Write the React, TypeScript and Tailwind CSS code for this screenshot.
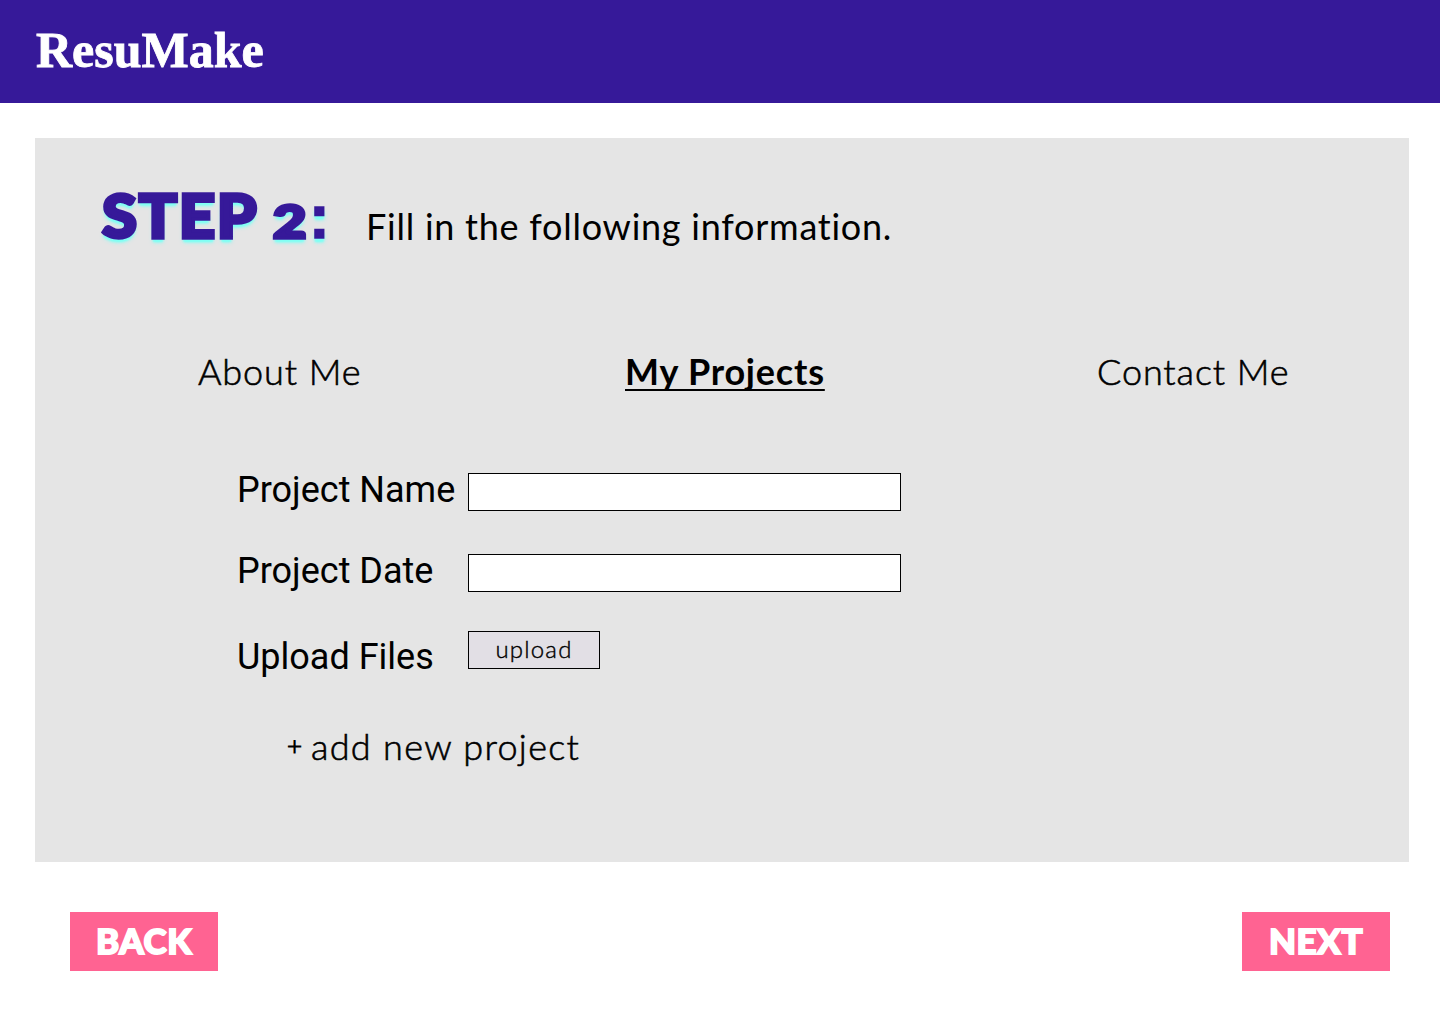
import React from "react";

type TextProps = { children: React.ReactNode; className: string };

function Line({ children, className }: TextProps) {
  return <span className={`block whitespace-nowrap ${className}`}>{children}</span>;
}

function Field({ label, labelClass, children, className }: { label: string; labelClass: string; children: React.ReactNode; className: string }) {
  return (
    <div className={`flex items-start ${className}`}>
      <label className={`w-[231px] whitespace-nowrap font-['Roboto',sans-serif] text-[36px] leading-[42px] ${labelClass}`}>{label}</label>
      {children}
    </div>
  );
}

export default function App() {
  return (
    <div className="flex h-[1024px] w-[1440px] flex-col overflow-hidden bg-white font-['Lato',sans-serif] text-black">
      <header className="flex h-[103px] shrink-0 bg-[#361999] pt-[18px] pl-[36px]">
        <Line className="font-['Liberation_Serif',serif] text-[50px] font-bold leading-[64px] text-white [-webkit-text-stroke:0.8px_white]">ResuMake</Line>
      </header>
      <main className="mt-[35px] ml-[35px] h-[724px] w-[1374px] shrink-0 bg-[#e5e5e5]">
        <div className="flex h-[200px] pl-[67px] pt-[40px]">
          <h1 className="flex w-[264px] items-baseline whitespace-nowrap text-[60px] font-black leading-[75px] tracking-[1.5px] text-[#361999] [-webkit-text-stroke:3.5px_#361999] [text-shadow:0_4px_2px_#7ffff4,0_4px_4px_#7ffff4]">
            <span className="inline-block w-[171px] origin-left scale-x-[1.06]">STEP</span>
            <span className="inline-block w-[36px] origin-left scale-x-125 text-[46px]">2</span>
            <span className="font-['Liberation_Sans',sans-serif] text-[62px] font-bold [-webkit-text-stroke:1.5px_#361999]">:</span>
          </h1>
          <Line className="pt-[27px] text-[36px] leading-[42px] tracking-[0.75px]">Fill in the following information.</Line>
        </div>
        <nav className="flex h-[131px] pl-[163px] pt-[12px] text-[36px] leading-[42px]">
          <Line className="w-[427px] font-light tracking-[0.9px] [-webkit-text-stroke:0.6px_black]">About Me</Line>
          <Line className="w-[472px] font-bold tracking-[0.8px] underline decoration-2 underline-offset-[4px] [text-decoration-skip-ink:none]">My Projects</Line>
          <Line className="w-[200px] font-light tracking-[0.9px] [-webkit-text-stroke:0.6px_black]">Contact Me</Line>
        </nav>
        <form className="pl-[202px]">
          <Field label="Project Name" labelClass="-mt-[4px]" className="h-[81px] pt-[4px]">
            <input className="h-[38px] w-[433px] border border-black bg-white" />
          </Field>
          <Field label="Project Date" labelClass="-mt-[4px]" className="h-[77px] pt-[4px]">
            <input className="h-[38px] w-[433px] border border-black bg-white" />
          </Field>
          <Field label="Upload Files" labelClass="pt-[5px]" className="h-[92px] pt-[4px]">
            <button type="button" className="h-[38px] w-[132px] border border-black bg-[#e2dfe5] pb-[2px] text-[24px] leading-[34px] font-light tracking-[1.2px] [-webkit-text-stroke:0.4px_black]">upload</button>
          </Field>
          <div className="flex h-[54px] items-start pl-[50px] text-[36px] font-light leading-[54px] tracking-[1.3px] [-webkit-text-stroke:0.6px_black]">
            <span className="w-[24px] text-[26px] leading-[52px] [-webkit-text-stroke:1px_black]">+</span>
            <Line className="">add new project</Line>
          </div>
        </form>
      </main>
      <footer className="mt-[50px] flex justify-between pr-[50px] pl-[70px] text-[35px] font-black text-white">
        <button type="button" className="h-[59px] w-[148px] bg-[#ff6392] pb-[2px] tracking-[0.5px] [-webkit-text-stroke:1.8px_white]">BACK</button>
        <button type="button" className="h-[59px] w-[148px] bg-[#ff6392] pb-[2px] tracking-[0.5px] [-webkit-text-stroke:1.8px_white]">NEXT</button>
      </footer>
    </div>
  );
}
